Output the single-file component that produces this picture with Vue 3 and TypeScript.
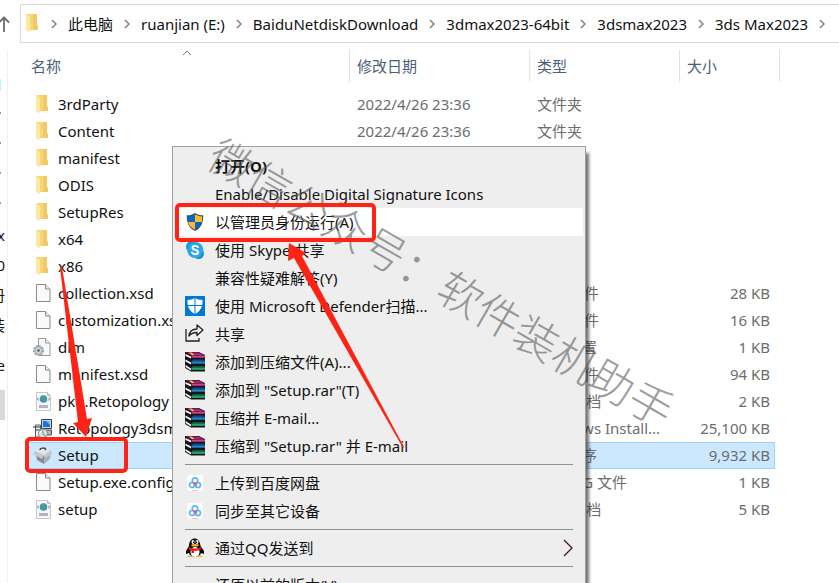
<script setup lang="ts">
interface FileRow {
  name: string
  icon: string
  type: string
  size: string
  selected?: boolean
}

interface MenuEntry {
  label: string
  icon?: string
  primary?: boolean
  hover?: boolean
  submenu?: boolean
}

const crumbs: string[] = ['此电脑', 'ruanjian (E:)', 'BaiduNetdiskDownload', '3dmax2023-64bit', '3dsmax2023', '3ds Max2023']

const modified = '2022/4/26 23:36'

const folders: string[] = ['3rdParty', 'Content', 'manifest', 'ODIS', 'SetupRes', 'x64', 'x86']

const rows: FileRow[] = [
  ...folders.map((name) => ({ name, icon: 'folder', type: '文件夹', size: '' })),
  { name: 'collection.xsd', icon: 'file', type: 'XSD 文件', size: '28 KB' },
  { name: 'customization.xsd', icon: 'file', type: 'XSD 文件', size: '16 KB' },
  { name: 'dlm', icon: 'config', type: '配置设置', size: '1 KB' },
  { name: 'manifest.xsd', icon: 'file', type: 'XSD 文件', size: '94 KB' },
  { name: 'pkg.Retopology', icon: 'xml', type: 'XML 文档', size: '2 KB' },
  { name: 'Retopology3dsmax', icon: 'installer', type: 'Windows Install...', size: '25,100 KB' },
  { name: 'Setup', icon: 'box', type: '应用程序', size: '9,932 KB', selected: true },
  { name: 'Setup.exe.config', icon: 'file', type: 'CONFIG 文件', size: '1 KB' },
  { name: 'setup', icon: 'xml', type: 'XML 文档', size: '5 KB' },
]

const menuGroups: MenuEntry[][] = [
  [
    { label: '打开(O)', primary: true },
    { label: 'Enable/Disable Digital Signature Icons' },
    { label: '以管理员身份运行(A)', icon: 'shield', hover: true },
    { label: '使用 Skype 共享', icon: 'skype' },
    { label: '兼容性疑难解答(Y)' },
    { label: '使用 Microsoft Defender扫描...', icon: 'defender' },
    { label: '共享', icon: 'share' },
    { label: '添加到压缩文件(A)...', icon: 'rar' },
    { label: '添加到 "Setup.rar"(T)', icon: 'rar' },
    { label: '压缩并 E-mail...', icon: 'rar' },
    { label: '压缩到 "Setup.rar" 并 E-mail', icon: 'rar' },
  ],
  [
    { label: '上传到百度网盘', icon: 'netdisk' },
    { label: '同步至其它设备', icon: 'netdisk' },
  ],
  [{ label: '通过QQ发送到', icon: 'qq', submenu: true }],
  [{ label: '还原以前的版本(V)' }],
]
</script>

<template>
  <div class="explorer">
    <svg class="sprite" aria-hidden="true">
      <symbol id="folder" viewBox="0 0 20 20">
        <path d="M3 0h11v11l1 1v4H3z" fill="#f7d678" />
        <path d="M10 0h4v11l1 1v4h-5z" fill="#f3ca62" />
        <path d="M3 0l4 3v14.500L6 18l-3-2z" fill="#ffe8a6" />
      </symbol>
      <symbol id="file" viewBox="0 0 20 20">
        <path d="M3.500 .5h9l4.500 4.500v12.500H3.500z" fill="#fafafa" stroke="#8a8a8a" />
        <path d="M12.500 .5V5H17" fill="#eee" stroke="#8a8a8a" />
      </symbol>
      <symbol id="config" viewBox="0 0 20 20">
        <path d="M5.500 .5h7l4.500 4.500v12.500H5.500z" fill="#fafafa" stroke="#999" />
        <path d="M12.500 .5V5H17" fill="#eee" stroke="#999" />
        <circle cx="5.500" cy="12.500" r="4.500" fill="#b8c1c8" stroke="#9aa5ad" stroke-width="2" stroke-dasharray="2 1" />
        <circle cx="5.500" cy="12.500" r="2.500" fill="#d5dde2" />
        <circle cx="5.500" cy="12.500" r="1.200" fill="#42515c" />
      </symbol>
      <symbol id="xml" viewBox="0 0 20 20">
        <path d="M3.500 .5h11l3 3v15h-14z" fill="#f7f7f8" stroke="#c7c7ca" />
        <path d="M14.500 .5v3h3" fill="#ddd" stroke="#bbb" />
        <circle cx="10.500" cy="7" r="3.800" fill="#3e91cf" />
        <path d="M9 3.500l3 .5-.5 2.500-2 1-2-1zM12 7l2 1-2 2.500z" fill="#4daa55" />
        <path d="M6 6l-2 1 2 1.500M15 6l2 1-2 1.500" fill="none" stroke="#76a9ce" />
        <path d="M6 13h9v3H6z" fill="#b2b3c4" />
      </symbol>
      <symbol id="installer" viewBox="0 0 20 20">
        <path d="M8.500 .5h10v9h-10z" fill="#cfd3d8" stroke="#3d4249" />
        <path d="M10 2h7v6h-7z" fill="#1476e0" />
        <path d="M13 2h4v4z" fill="#66c7ff" />
        <path d="M2.500 6h5v12h-5z" fill="#eceff2" stroke="#565b62" />
        <path d="M0 8h7M2 11h5" stroke="#333" />
        <path d="M11.500 11h7v5h-7z" fill="#aeb3bb" stroke="#555" />
        <circle cx="10" cy="14.500" r="4.500" fill="#dfe9ee" stroke="#7b8289" />
        <path d="M10 14.500l-2-4 3-.5zM10 14.500l3.500 2-2 2z" fill="#73c497" />
        <circle cx="10" cy="14.500" r="1" fill="#fff" stroke="#555" stroke-width=".5" />
      </symbol>
      <symbol id="box" viewBox="0 0 20 20">
        <path d="M2 5l8-4 8 3-7 5z" fill="#e2e5e8" />
        <path d="M3 8l8 2v8l-7-4z" fill="#858b94" />
        <path d="M11 10l7-4-1 7-6 5z" fill="#aab0b8" />
        <path d="M0 8l2-3 9 4-2 4zM11 9l7-5 1 4-7 4z" fill="#c3c8ce" />
        <path d="M7 4c0-2 5-3 6 0" fill="none" stroke="#3c4147" stroke-width="1.500" />
      </symbol>
      <symbol id="shield" viewBox="0 0 20 20">
        <path d="M10 1c2 1.500 5 2.300 8.200 2.300C18.500 10 16.500 16 10 19 3.500 16 1.500 10 1.800 3.300 5 3.300 8 2.500 10 1z" fill="#474c52" />
        <path d="M10 2.500V10H3c-.2-1.500-.2-4 0-5.500 2.500-.2 5-.8 7-2z" fill="#0767c3" />
        <path d="M10 2.500c2 1.200 4.500 1.800 7 2 .2 1.500.2 4 0 5.500h-7z" fill="#fdbb30" />
        <path d="M3 10h7v7.700C5.800 15.800 3.600 13 3 10z" fill="#fdbb30" />
        <path d="M10 10h7c-.6 3-2.800 5.800-7 7.700z" fill="#0767c3" />
      </symbol>
      <symbol id="skype" viewBox="0 0 20 20">
        <circle cx="7" cy="7" r="6" fill="#178fd5" />
        <circle cx="13.500" cy="13.500" r="5.500" fill="#178fd5" />
        <circle cx="10.200" cy="10" r="8" fill="#28a8ea" />
        <path d="M13 7.200C12 5.300 7.500 5.300 7.500 7.700c0 2.700 5.600 1.500 5.600 4.500 0 2.700-5 2.500-6 .3" fill="none" stroke="#fff" stroke-width="1.900" stroke-linecap="round" />
      </symbol>
      <symbol id="defender" viewBox="0 0 20 20">
        <path d="M0 0h20v20H0z" fill="#0078d7" />
        <path d="M10 2c2 1.300 4.500 2 7.500 2 .3 6-1.500 11-7.500 14C4 15 2.200 10 2.500 4c3 0 5.500-.7 7.500-2z" fill="#fff" />
        <path d="M10 2v16M2.500 9.500h15" stroke="#0078d7" />
      </symbol>
      <symbol id="share" viewBox="0 0 20 20">
        <path d="M1 5v12h13v-3" fill="none" stroke="#222" stroke-width="1.300" />
        <path d="M4 12c.5-5 3-7 8-7V1l6 5-6 5.500V8.500c-4 0-6 1-8 3.500z" fill="none" stroke="#222" stroke-width="1.300" stroke-linejoin="round" />
      </symbol>
      <symbol id="rar" viewBox="0 0 20 20">
        <path d="M0 0h14l6 3v16.500H6L0 16z" fill="#1b1219" />
        <path d="M1 .5h12.500L19 3H6z" fill="#a32473" />
        <path d="M6.500 3.500H20v2.200H6.500z" fill="#d0408f" />
        <path d="M8 7.500h11l1 2H7z" fill="#0d4f8c" />
        <path d="M6.500 9.500H20v2.200H6.500z" fill="#2288cd" />
        <path d="M8 14h11l1 1.500H7z" fill="#0c5c37" />
        <path d="M6.500 15.500H20v2.400H6.500z" fill="#23a56a" />
        <path d="M.5 2L6 4.500v2L.5 4zM.5 7.500L6 10.500v2L.5 9.500zM.5 13L6 16.500v2L.5 15z" fill="#f6f6f6" />
        <path d="M4 .5h2.500l3 2.500H7z" fill="#efd03c" />
      </symbol>
      <symbol id="netdisk" viewBox="0 0 20 20">
        <rect x="2" y="2" width="16" height="16" rx="3" fill="#fff" />
        <circle cx="10" cy="7.500" r="2.700" fill="none" stroke="#5fb8f5" stroke-width="1.700" />
        <circle cx="7" cy="12" r="2.500" fill="none" stroke="#54b9f2" stroke-width="1.700" />
        <circle cx="13" cy="12" r="2.500" fill="none" stroke="#54b9f2" stroke-width="1.700" />
        <path d="M8 9.500l4 3M12 9.500l-3 2" stroke="#ee5875" stroke-width="1.500" />
        <path d="M7 17.500h6" stroke="#f7b9c4" />
      </symbol>
      <symbol id="qq" viewBox="0 0 20 20">
        <path d="M4 8C4-2 15-2 15.500 8l3.500 5v3l-3-1c-1 5-11 5-12 0l-3 1v-3z" fill="#080808" />
        <ellipse cx="10" cy="14" rx="4.500" ry="5" fill="#fff" />
        <ellipse cx="8" cy="4" rx="1.500" ry="2" fill="#fff" />
        <ellipse cx="12" cy="4" rx="1.500" ry="2" fill="#fff" />
        <path d="M8.500 3.500v1.500M11.500 3.500v1.500" stroke="#000" />
        <ellipse cx="10" cy="7.300" rx="3.800" ry="1.300" fill="#f5b324" />
        <path d="M4 9c4 2 8 2 12 0v2.500c-2 1-5 1.500-7 1.300V15H6.500v-2.500L4 11.500z" fill="#e8141c" />
        <path d="M2 19c1-2 5-2 7 0zM11 19c1-2 5-2 7 0z" fill="#eeb02a" />
      </symbol>
    </svg>

    <header class="topbar">
      <button class="up" aria-label="上移">
        <svg width="12" height="16" viewBox="0 0 12 16"><path d="M6 16V1.500M1 6.500l5-5 5 5" fill="none" stroke="#6b6b6b" stroke-width="1.800" /></svg>
      </button>
      <nav class="address">
        <svg class="icon"><use href="#folder" /></svg>
        <template v-for="crumb in crumbs" :key="crumb">
          <svg class="chevron" viewBox="0 0 6 10"><path d="M1 1l4 4-4 4" /></svg>
          <button class="crumb">{{ crumb }}</button>
        </template>
        <svg class="chevron" viewBox="0 0 6 10"><path d="M1 1l4 4-4 4" /></svg>
      </nav>
    </header>

    <div class="body">
      <aside class="tree">
        <div class="tree-group">
          <span class="mark cyan"></span>
          <span v-for="n in 4" :key="n" class="mark"></span>
          <span>x</span>
          <span>0</span>
          <span>册</span>
          <span>装</span>
        </div>
        <div class="tree-group"><span>e</span></div>
        <div class="tree-group current"><span></span></div>
      </aside>

      <main class="files">
        <table>
          <colgroup>
            <col class="col-name" />
            <col class="col-date" />
            <col class="col-type" />
            <col class="col-size" />
          </colgroup>
          <thead>
            <tr>
              <th>
                <button>名称</button>
                <svg class="sort" viewBox="0 0 10 6"><path d="M1 5l4-4 4 4" /></svg>
              </th>
              <th><button>修改日期</button></th>
              <th><button>类型</button></th>
              <th><button>大小</button></th>
            </tr>
          </thead>
          <tbody>
            <tr v-for="row in rows" :key="row.name" :class="{ selected: row.selected }">
              <td>
                <div class="cell name">
                  <svg class="icon"><use :href="'#' + row.icon" /></svg>{{ row.name }}
                </div>
              </td>
              <td><div class="cell">{{ modified }}</div></td>
              <td><div class="cell">{{ row.type }}</div></td>
              <td><div class="cell size">{{ row.size }}</div></td>
            </tr>
          </tbody>
        </table>
      </main>
    </div>

    <div class="menu" role="menu">
      <div v-for="(group, i) in menuGroups" :key="i" class="menu-group" role="group">
        <button
          v-for="entry in group"
          :key="entry.label"
          class="menu-item"
          :class="{ primary: entry.primary, hover: entry.hover }"
          role="menuitem"
        >
          <svg class="icon"><use v-if="entry.icon" :href="'#' + entry.icon" /></svg>
          <span class="label">{{ entry.label }}</span>
          <svg v-if="entry.submenu" class="more" viewBox="0 0 10 18"><path d="M1 1l8 8-8 8" /></svg>
        </button>
      </div>
    </div>

    <p class="watermark">微信公众号：软件装机助手</p>

    <svg class="marks" viewBox="0 0 839 583" width="839" height="583" aria-hidden="true">
      <rect x="177" y="205" width="197" height="35" rx="3" />
      <rect x="27" y="439" width="99" height="32" rx="3" />
      <path d="M60 267h2L87 419l5-1-6 19-13-14 5-1z" />
      <path d="M289 243l17 10-4 3L404 447l-1 1L294 258l-6 3z" />
    </svg>
  </div>
</template>

<style>
body {
  margin: 0;
  background: #fff;
}
</style>

<style scoped>
.explorer {
  position: relative;
  height: 100vh;
  overflow: hidden;
  display: flex;
  flex-direction: column;
  font: 15px/20px 'Noto Sans', 'Noto Sans CJK SC', sans-serif;
  color: #111;
  background: #fff;
}
button {
  margin: 0;
  padding: 0;
  border: 0;
  background: none;
  font: inherit;
  color: inherit;
  text-align: left;
  white-space: nowrap;
}
.sprite {
  position: absolute;
  width: 0;
  height: 0;
}
.icon {
  flex: none;
  width: 20px;
  height: 20px;
}
.topbar {
  display: flex;
  padding-top: 4px;
}
.up {
  flex: none;
  width: 20px;
  display: flex;
  align-items: center;
  margin-left: -2px;
  margin-right: 2px;
}
.address {
  flex: 1;
  min-width: 0;
  height: 37px;
  display: flex;
  align-items: center;
  overflow: hidden;
  padding-left: 2px;
  border: 1px solid #d9d9d9;
  border-right: 0;
}
.chevron {
  flex: none;
  width: 6px;
  height: 10px;
  margin: 0 11px;
  fill: none;
  stroke: #808080;
  stroke-width: 1.5;
}
.address .icon + .chevron {
  margin-left: 8px;
}
.body {
  flex: 1;
  display: flex;
}
.tree {
  flex: none;
  width: 8px;
  margin-top: 7px;
  padding-top: 20px;
  box-sizing: border-box;
  border-right: 1px solid #f0f0f0;
  display: flex;
  flex-direction: column;
  gap: 10px;
  overflow: hidden;
}
.tree-group {
  display: flex;
  flex-direction: column;
  align-items: flex-end;
  padding-right: 2px;
}
.tree-group span {
  height: 30px;
  line-height: 30px;
}
.tree-group .mark {
  width: 5px;
  background: linear-gradient(#9a9a9a, #9a9a9a) 0 12px / 1px 2px no-repeat;
}
.tree-group .cyan {
  background: linear-gradient(#a8f8ff, #a8f8ff) 0 9px / 1px 12px no-repeat;
}
.tree-group.current {
  margin-right: 2px;
  background: #d9d9d9;
}
.files {
  flex: 1;
  min-width: 0;
  padding: 7px 0 0 15px;
}
table {
  width: 757px;
  table-layout: fixed;
  border-collapse: collapse;
}
.col-name {
  width: 327px;
}
.col-date {
  width: 180px;
}
.col-type {
  width: 150px;
}
.col-size {
  width: 100px;
}
th,
td {
  padding: 0;
  font-weight: 400;
  text-align: left;
}
th {
  position: relative;
  height: 41px;
  vertical-align: top;
}
th button {
  width: 100%;
  height: 32px;
  padding-left: 7px;
  border-right: 1px solid #e2e2e2;
  color: #4c607a;
}
th:first-child button {
  padding-left: 8px;
}
.sort {
  position: absolute;
  top: 0;
  left: 50%;
  width: 10px;
  height: 6px;
  margin-left: -5px;
  fill: none;
  stroke: #777;
}
.cell {
  height: 27px;
  line-height: 27px;
  padding-left: 7px;
  overflow: hidden;
  white-space: nowrap;
  color: #6d6d6d;
}
.cell.name {
  display: flex;
  align-items: center;
  gap: 5px;
  margin-left: 4px;
  color: #111;
}
.cell.name .icon {
  margin-left: -1px;
}
.cell.size {
  margin-right: 5px;
  padding-right: 5px;
  text-align: right;
}
.selected .cell {
  background: #cce8ff;
  box-shadow: inset 0 1px #99d1ff, inset 0 -1px #99d1ff;
}
.selected .size {
  box-shadow: inset 0 1px #99d1ff, inset -1px -1px #99d1ff;
}
.menu {
  position: absolute;
  top: 146px;
  left: 172px;
  width: 414px;
  box-sizing: border-box;
  padding: 5px 2px;
  border: 1px solid #a0a0a0;
  background: #eee;
  box-shadow: 4px 6px 3px -1px rgba(0, 0, 0, 0.55);
}
.menu-group + .menu-group::before {
  content: '';
  display: block;
  height: 1px;
  margin: 4px 10px;
  background: #919191;
}
.menu-item {
  display: flex;
  align-items: center;
  gap: 10px;
  width: 100%;
  height: 28px;
  padding: 0 10px;
}
.menu-item.primary {
  font-weight: 700;
}
.menu-item.hover {
  background: #fff;
}
.label {
  flex: 1;
}
.more {
  width: 10px;
  height: 18px;
  fill: none;
  stroke: #4a1522;
  stroke-width: 1.3;
}
.watermark {
  position: absolute;
  top: 119px;
  left: 214px;
  margin: 0;
  font: 300 44px/60px 'Noto Sans CJK SC', sans-serif;
  color: rgba(90, 90, 90, 0.6);
  white-space: nowrap;
  transform: rotate(30deg);
  transform-origin: 0 50%;
  pointer-events: none;
}
.marks {
  position: absolute;
  top: 0;
  left: 0;
  fill: #ff2315;
  pointer-events: none;
}
.marks rect {
  fill: none;
  stroke: #ff2315;
  stroke-width: 4;
}
</style>
